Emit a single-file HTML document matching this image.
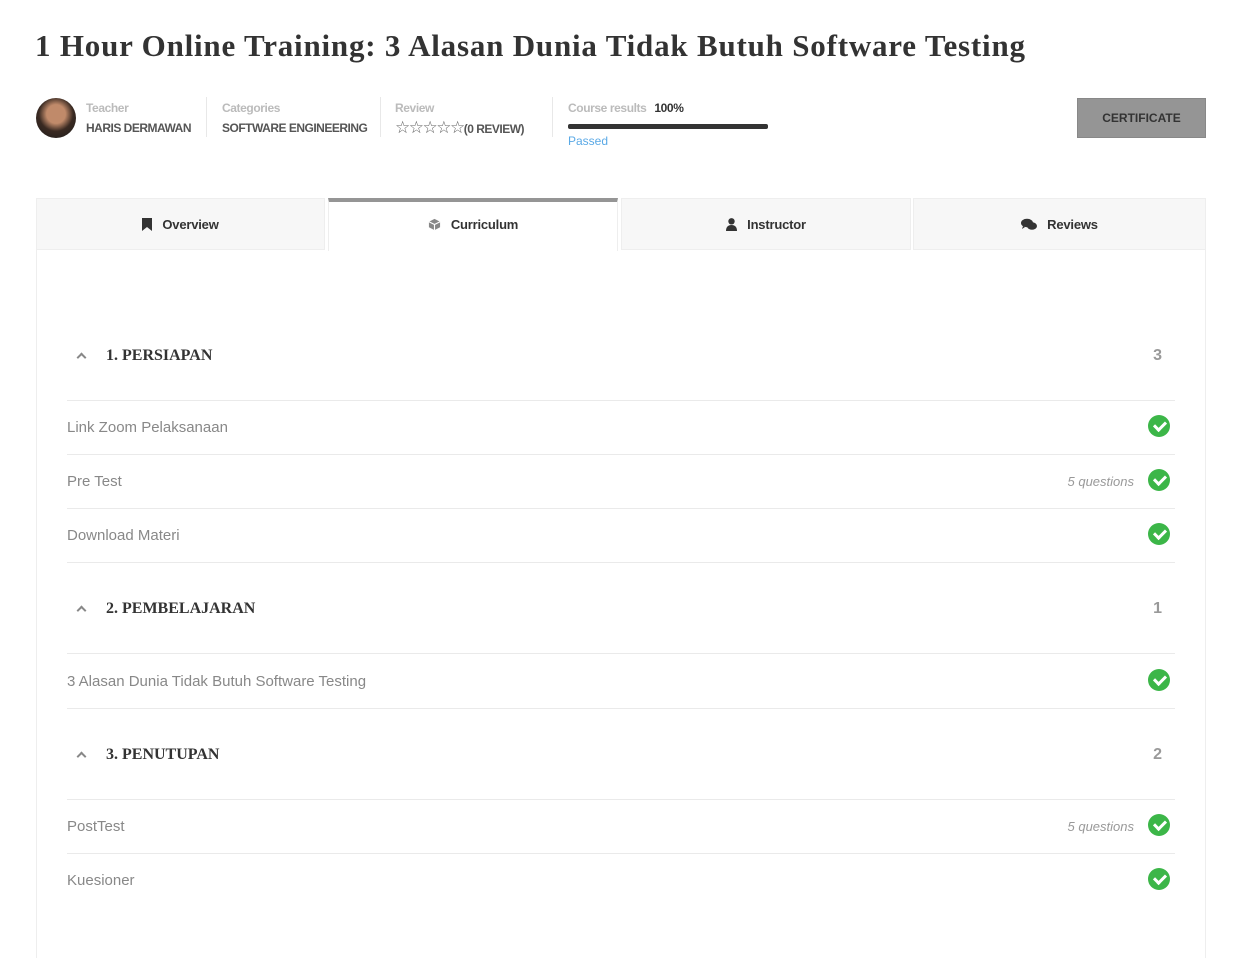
<!DOCTYPE html>
<html style="width:1255px;height:958px;overflow:hidden"><head><meta charset="utf-8"><style>
*{box-sizing:border-box;margin:0;padding:0}
body{width:1255px;height:958px;background:#fff;font-family:"Liberation Sans",sans-serif;position:relative;overflow:hidden;color:#333}
h1{position:absolute;left:35px;top:28px;font-family:"Liberation Serif",serif;font-weight:bold;font-size:31px;color:#333;letter-spacing:0.8px;white-space:nowrap}
.meta{position:absolute;top:97px;height:42px}
.lbl{font-size:12px;color:#bbb;font-weight:bold;letter-spacing:-0.4px}
.val{font-size:12px;color:#555;font-weight:bold;margin-top:6px;letter-spacing:-0.5px}
.sep{position:absolute;top:97px;width:1px;height:40px;background:#e8e8e8}
.cert{position:absolute;left:1077px;top:98px;width:129px;height:40px;background:#959595;border:1px solid #888;color:#333;font-size:12px;font-weight:bold;text-align:center;line-height:38px}
.tabs{position:absolute;left:36px;top:198px;width:1170px;height:52px}
.tab{position:absolute;top:0;height:52px;background:#f7f7f7;border:1px solid #eee;font-size:13px;font-weight:bold;color:#333;display:flex;align-items:center;justify-content:center;gap:10px;letter-spacing:-0.2px}
.box{position:absolute;left:36px;top:249px;width:1170px;height:720px;border:1px solid #eee;border-top:none}
.sec{position:absolute;left:67px;width:1108px;font-family:"Liberation Serif",serif;font-weight:bold;font-size:16px;color:#333}
.sec .n{position:absolute;right:13px;top:0;font-family:"Liberation Sans",sans-serif;color:#999;font-size:16px;font-weight:bold}
.chev{position:absolute;left:11px;top:7px;width:7px;height:7px;border-left:2px solid #888;border-top:2px solid #888;transform:rotate(45deg)}
.line{position:absolute;left:67px;width:1108px;height:1px;background:#eaeaea}
.it{position:absolute;left:67px;width:1108px;font-size:15px;color:#888;height:20px;line-height:20px}
.q{position:absolute;right:41px;top:0;font-style:italic;font-size:13px;color:#999}
.ck{position:absolute;right:5px;top:-3px;width:22px;height:22px;border-radius:50%;background:#3cb648}
.ck:after{content:"";position:absolute;left:8px;top:4px;width:5px;height:9px;border-right:3px solid #fff;border-bottom:3px solid #fff;transform:rotate(45deg)}
</style></head><body>
<h1>1 Hour Online Training: 3 Alasan Dunia Tidak Butuh Software Testing</h1>
<div style="position:absolute;left:36px;top:98px;width:40px;height:40px;border-radius:50%;background:radial-gradient(circle at 50% 40%,#c08a6a 0 30%,#3a2a22 55%,#1a1a1a 100%)"></div>
<div class="meta" style="left:86px;top:101px"><div class="lbl">Teacher</div><div class="val">HARIS DERMAWAN</div></div>
<div class="sep" style="left:206px"></div>
<div class="meta" style="left:222px;top:101px"><div class="lbl">Categories</div><div class="val">SOFTWARE ENGINEERING</div></div>
<div class="sep" style="left:380px"></div>
<div class="meta" style="left:395px;top:101px"><div class="lbl">Review</div><div class="val" style="margin-top:3px"><span style="font-size:17px;font-weight:normal;color:#666;letter-spacing:-1.5px">☆☆☆☆☆</span>(0 REVIEW)</div></div>
<div class="sep" style="left:552px"></div>
<div class="meta" style="left:568px;top:101px"><div class="lbl">Course results <span style="color:#333;margin-left:5px">100%</span></div>
<div style="width:200px;height:5px;background:#333;margin-top:9px;border-radius:2px"></div>
<div style="font-size:12px;color:#5aa9e6;margin-top:5px">Passed</div></div>
<div class="cert">CERTIFICATE</div>
<div class="tabs">
<div class="tab" style="left:0;width:289px"><svg width="10" height="13" viewBox="0 0 10 13"><path d="M0 0h10v13l-5-4-5 4z" fill="#333"/></svg>Overview</div>
<div class="tab" style="left:292px;width:290px;background:#fff;border-top:4px solid #959595;border-bottom:none;height:53px;padding-bottom:5px"><svg width="13" height="13" viewBox="0 0 14 14"><path d="M7 1l6 3v6l-6 3-6-3V4z" fill="#888"/><path d="M1 4l6 3 6-3M7 7v6" stroke="#fff" stroke-width="1.2" fill="none"/></svg>Curriculum</div>
<div class="tab" style="left:585px;width:290px"><svg width="11" height="13" viewBox="0 0 11 13"><circle cx="5.5" cy="3.3" r="3.2" fill="#333"/><path d="M0 13c0-4 2-6 5.5-6S11 9 11 13z" fill="#333"/></svg>Instructor</div>
<div class="tab" style="left:877px;width:293px"><svg width="16" height="13" viewBox="0 0 16 13"><ellipse cx="6" cy="5" rx="6" ry="4.2" fill="#333"/><ellipse cx="11" cy="8" rx="5" ry="3.8" fill="#333"/><path d="M2 8l-1 3 3-2z" fill="#333"/></svg>Reviews</div>
</div>
<div class="box"></div>
<div class="sec" style="top:347px"><span class="chev"></span><span style="margin-left:39px">1. PERSIAPAN</span><span class="n">3</span></div>
<div class="line" style="top:400px"></div>
<div class="it" style="top:418px">Link Zoom Pelaksanaan<span class="ck"></span></div>
<div class="line" style="top:454px"></div>
<div class="it" style="top:472px">Pre Test<span class="q">5 questions</span><span class="ck"></span></div>
<div class="line" style="top:508px"></div>
<div class="it" style="top:526px">Download Materi<span class="ck"></span></div>
<div class="line" style="top:562px"></div>
<div class="sec" style="top:600px"><span class="chev"></span><span style="margin-left:39px">2. PEMBELAJARAN</span><span class="n">1</span></div>
<div class="line" style="top:653px"></div>
<div class="it" style="top:672px">3 Alasan Dunia Tidak Butuh Software Testing<span class="ck"></span></div>
<div class="line" style="top:708px"></div>
<div class="sec" style="top:746px"><span class="chev"></span><span style="margin-left:39px">3. PENUTUPAN</span><span class="n">2</span></div>
<div class="line" style="top:799px"></div>
<div class="it" style="top:817px">PostTest<span class="q">5 questions</span><span class="ck"></span></div>
<div class="line" style="top:853px"></div>
<div class="it" style="top:871px">Kuesioner<span class="ck"></span></div>
</body></html>
